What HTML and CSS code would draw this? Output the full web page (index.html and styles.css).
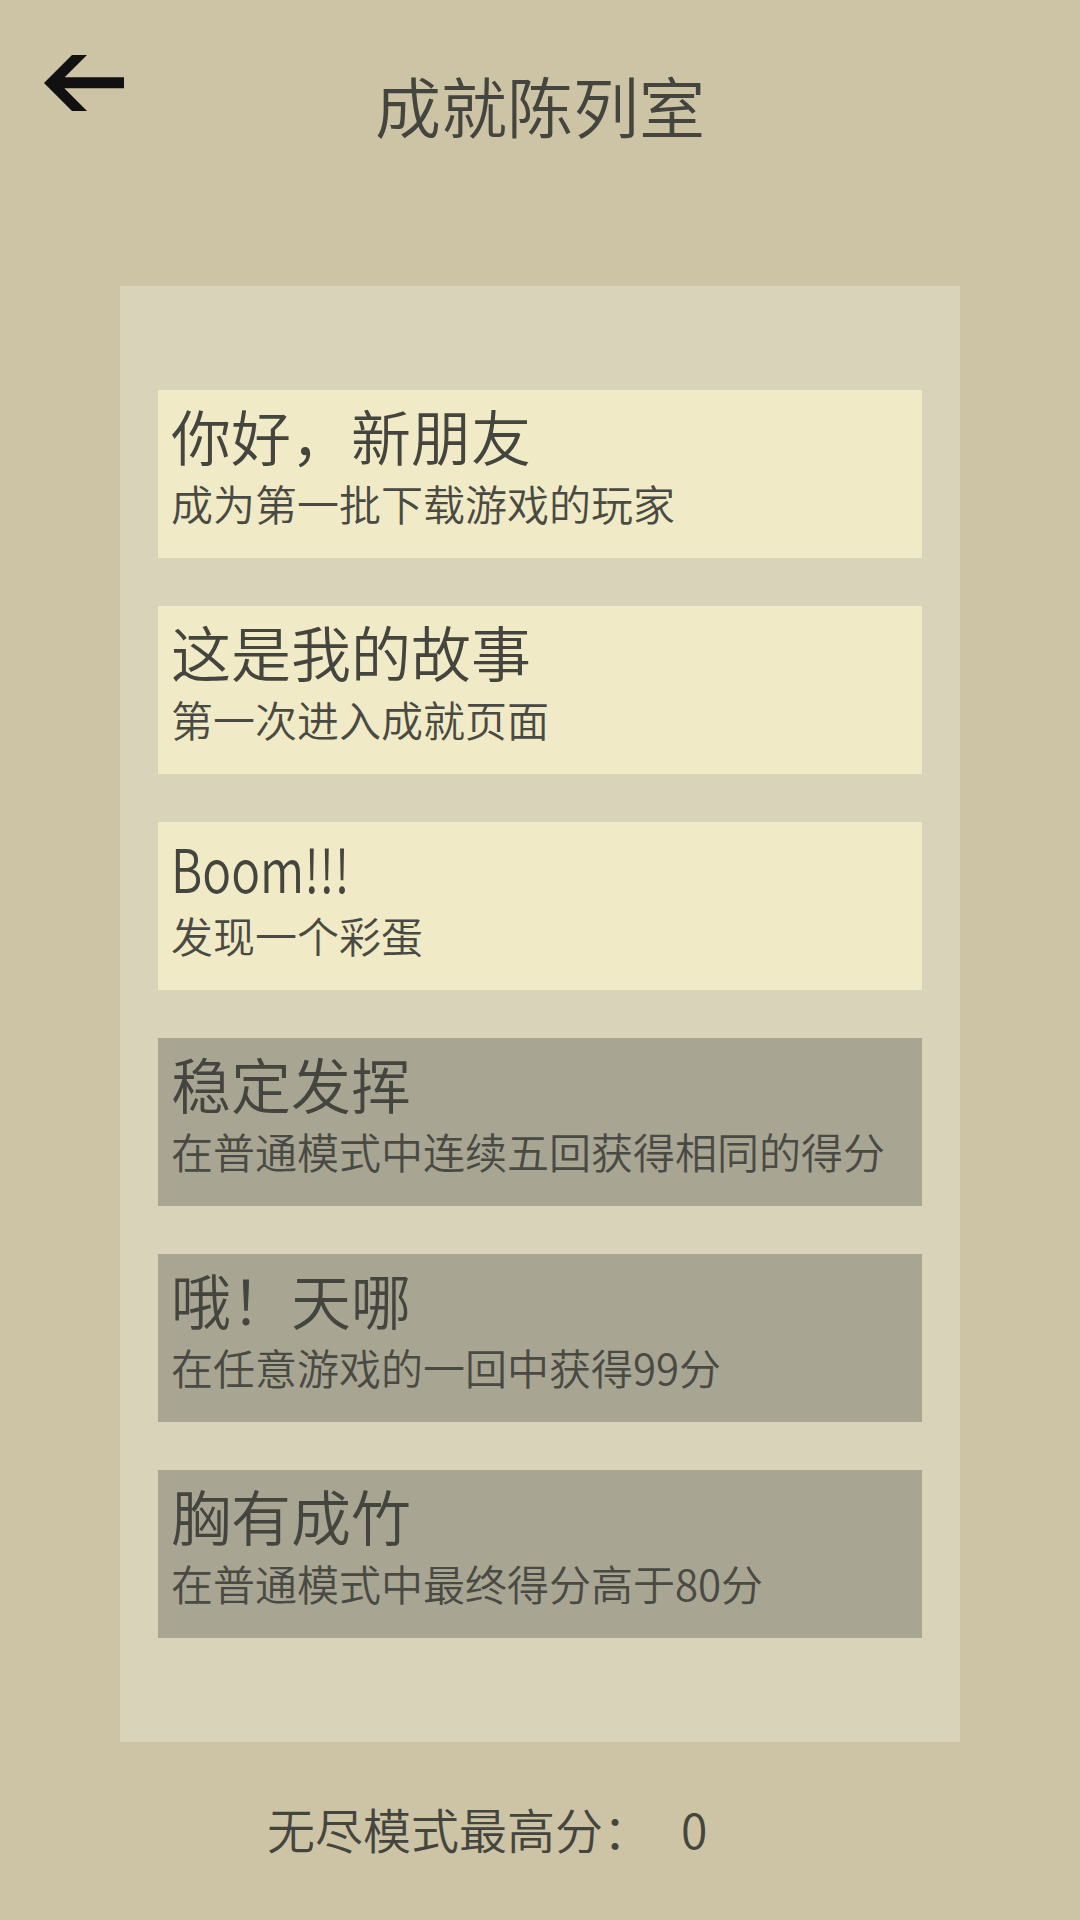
FILE: index.html
```html
<!DOCTYPE html>
<html lang="zh-CN">
<head>
<meta charset="utf-8">
<title>成就陈列室</title>
<link rel="stylesheet" href="styles.css">
</head>
<body>
<div class="screen">
  <header class="header">
    <div class="back">
      <svg class="back-icon" width="80" height="56" viewBox="0 0 80 56">
        <polygon points="0,28 28,0 43,0 20.7,22.3 80,22.3 80,33.3 20.3,33.3 43,56 28,56" fill="#111"/>
      </svg>
    </div>
    <h1 class="title">成就陈列室</h1>
    <div class="spacer"></div>
  </header>

  <section class="panel">
    <div class="card card-on">
      <div class="card-title">你好，新朋友</div>
      <div class="card-desc">成为第一批下载游戏的玩家</div>
    </div>
    <div class="card card-on">
      <div class="card-title">这是我的故事</div>
      <div class="card-desc">第一次进入成就页面</div>
    </div>
    <div class="card card-on">
      <div class="card-title"><span class="latin">Boom!!!</span></div>
      <div class="card-desc">发现一个彩蛋</div>
    </div>
    <div class="card card-off">
      <div class="card-title">稳定发挥</div>
      <div class="card-desc">在普通模式中连续五回获得相同的得分</div>
    </div>
    <div class="card card-off">
      <div class="card-title">哦！天哪</div>
      <div class="card-desc">在任意游戏的一回中获得99分</div>
    </div>
    <div class="card card-off">
      <div class="card-title">胸有成竹</div>
      <div class="card-desc">在普通模式中最终得分高于80分</div>
    </div>
  </section>

  <footer class="footer">
    <span class="footer-label">无尽模式最高分：</span><span class="footer-value">0</span>
  </footer>
</div>
</body>
</html>
```

FILE: styles.css
```css
html, body {
  margin: 0;
  padding: 0;
}

body {
  background: #ccc4a5;
  font-family: "Noto Sans CJK SC", "Noto Sans", sans-serif;
  font-weight: 350;
  color: #444440;
}

.screen {
  width: 1080px;
  height: 1920px;
  overflow: hidden;
}

.header {
  height: 286px;
  display: grid;
  grid-template-columns: 1fr auto 1fr;
  align-items: start;
}

.back {
  padding: 55px 0 0 44px;
}

.back-icon {
  display: block;
}

.title {
  margin: 0;
  padding-top: 71px;
  font-size: 66px;
  line-height: 66px;
  font-weight: 350;
  color: #45453f;
}

.panel {
  width: 840px;
  margin-left: 120px;
  box-sizing: border-box;
  padding: 104px 38px;
  background: #d9d3ba;
  display: flex;
  flex-direction: column;
  gap: 48px;
}

.card {
  height: 168px;
  box-sizing: border-box;
  padding: 15px 12px 0 13px;
}

.card-on {
  background: #f0ebc6;
}

.card-off {
  background: #a8a593;
}

.card-title {
  font-size: 60px;
  line-height: 60px;
  color: #45453f;
}

.latin {
  display: inline-block;
  transform: scaleX(0.8);
  transform-origin: left center;
}

.card-desc {
  margin-top: 17px;
  font-size: 42px;
  line-height: 42px;
  color: #4a4a44;
}

.footer {
  padding: 62px 0 0 267px;
  font-size: 48px;
  line-height: 48px;
  color: #45453f;
}

.footer-value {
  margin-left: 30px;
}
```
